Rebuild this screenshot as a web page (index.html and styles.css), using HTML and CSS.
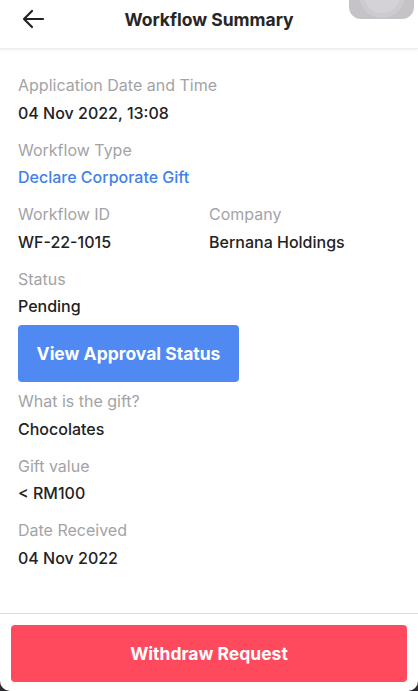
FILE: index.html
```html
<!DOCTYPE html>
<html lang="en">
<head>
  <meta charset="UTF-8" />
  <title>Workflow Summary</title>
  <link rel="stylesheet" href="styles.css">
</head>
<body>
  <div class="screen">
    <header class="topbar">
      <button class="back" aria-label="Back">
        <svg width="24" height="20" viewBox="0 0 24 20">
          <path d="M22 10H3M11 2L3 10l8 8" fill="none" stroke="#222" stroke-width="2.2" stroke-linecap="round" stroke-linejoin="round"/>
        </svg>
      </button>
      <h1>Workflow Summary</h1>
      <div class="touch"><span></span></div>
    </header>

    <main class="content">
      <div class="field">
        <div class="label">Application Date and Time</div>
        <div class="value">04 Nov 2022, 13:08</div>
      </div>
      <div class="field">
        <div class="label">Workflow Type</div>
        <div class="value link">Declare Corporate Gift</div>
      </div>
      <div class="row">
        <div class="field">
          <div class="label">Workflow ID</div>
          <div class="value">WF-22-1015</div>
        </div>
        <div class="field">
          <div class="label">Company</div>
          <div class="value">Bernana Holdings</div>
        </div>
      </div>
      <div class="field">
        <div class="label">Status</div>
        <div class="value">Pending</div>
        <button class="btn-blue">View Approval Status</button>
      </div>
      <div class="field">
        <div class="label">What is the gift?</div>
        <div class="value">Chocolates</div>
      </div>
      <div class="field">
        <div class="label">Gift value</div>
        <div class="value">&lt; RM100</div>
      </div>
      <div class="field">
        <div class="label">Date Received</div>
        <div class="value">04 Nov 2022</div>
      </div>
    </main>

    <footer class="footer">
      <button class="btn-red">Withdraw Request</button>
    </footer>
  </div>
</body>
</html>
```

FILE: styles.css
```css
body {
  margin: 0;
  background: #2b2b30;
  font-family: Inter, "Noto Sans", sans-serif;
  color: #222;
}

.screen {
  height: 691px;
  display: flex;
  flex-direction: column;
  background: #fff;
  border-radius: 0 0 10px 10px;
  overflow: hidden;
}

.topbar {
  position: relative;
  height: 48px;
  display: flex;
  align-items: center;
  justify-content: center;
  box-shadow: 0 1px 3px rgba(0, 0, 0, 0.08);
  border-bottom: 1px solid #eeeeee;
}

.topbar h1 {
  margin: 0;
  font-size: 17.5px;
  font-weight: 700;
  color: #262626;
  margin-top: -10px;
}

.back {
  position: absolute;
  left: 21px;
  top: 9px;
  border: none;
  background: none;
  padding: 0;
}

.touch {
  position: absolute;
  right: 4px;
  top: -30px;
  width: 65px;
  height: 49px;
  border-radius: 12px;
  background: #c5c3c7;
  display: flex;
  align-items: center;
  justify-content: center;
}

.touch span {
  width: 36px;
  height: 36px;
  border-radius: 50%;
  background: #d4d2d6;
  box-shadow: 0 0 0 5px #cdcbcf;
}

.content {
  flex: 1;
  padding: 25px 18px 0;
  display: flex;
  flex-direction: column;
  gap: 15px;
}

.row {
  display: grid;
  grid-template-columns: 191px 1fr;
}

.label {
  font-size: 16px;
  line-height: 22px;
  color: #a3a3a6;
  margin-bottom: 5.5px;
}

.value {
  font-size: 16px;
  line-height: 22px;
  font-weight: 500;
  color: #222;
}

.value.link {
  color: #3f82e8;
}

.btn-blue {
  display: block;
  margin-top: 8px;
  margin-bottom: -7px;
  width: 221px;
  height: 57px;
  border: none;
  border-radius: 4px;
  background: #4f89f1;
  color: #fff;
  font-family: inherit;
  font-size: 17.5px;
  font-weight: 700;
}

.footer {
  border-top: 1px solid #dddddd;
  padding: 11px 11px 9px;
}

.btn-red {
  display: block;
  width: 100%;
  height: 57px;
  border: none;
  border-radius: 4px;
  background: #ff4a5d;
  color: #fff;
  font-family: inherit;
  font-size: 17.5px;
  font-weight: 700;
}
```
